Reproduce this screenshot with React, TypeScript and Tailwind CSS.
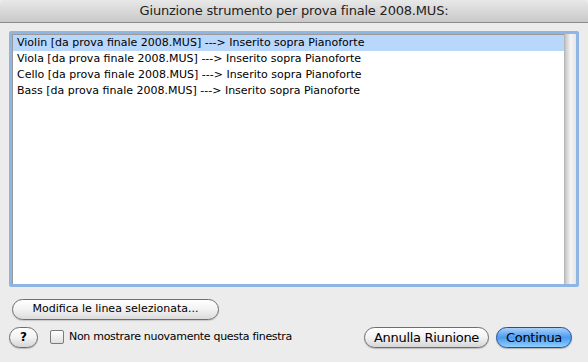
import React, { useState } from "react";

const rows = [
  "Violin [da prova finale 2008.MUS] ---> Inserito sopra Pianoforte",
  "Viola [da prova finale 2008.MUS] ---> Inserito sopra Pianoforte",
  "Cello [da prova finale 2008.MUS] ---> Inserito sopra Pianoforte",
  "Bass [da prova finale 2008.MUS] ---> Inserito sopra Pianoforte",
];

const font = "font-['Lucida_Grande','DejaVu_Sans',sans-serif]";

export default function App() {
  const [selected, setSelected] = useState(0);
  const [hide, setHide] = useState(false);

  return (
    <div className={`w-[588px] h-[362px] bg-[#ececec] ${font} text-black overflow-hidden flex flex-col`}>
      {/* Title bar */}
      <div className="h-[23px] shrink-0 bg-gradient-to-b from-[#e8e8e8] to-[#c9c9c9] border-b border-[#8a8a8a] rounded-t-[5px] flex items-center justify-center">
        <span className="text-[13px] tracking-[-0.2px] text-[#222]">Giunzione strumento per prova finale 2008.MUS:</span>
      </div>

      <div className="flex-1 flex flex-col px-[9px] pt-[8px]">
        {/* List */}
        <div className="h-[256px] border-[3px] border-[#8fb6e3] rounded-[2px] bg-white flex">
          <div className="flex-1 border-l border-t border-[#9a9a9a]">
            {rows.map((r, i) => (
              <div
                key={r}
                onClick={() => setSelected(i)}
                className={`h-[16px] pl-[4px] text-[11px] leading-[16px] whitespace-nowrap ${
                  selected === i ? "bg-[#b9d6fb]" : ""
                }`}
              >
                {r}
              </div>
            ))}
          </div>
          <div className="w-[12px] bg-gradient-to-r from-[#c4c4c4] via-[#f4f4f4] to-[#e6e6e6] border-l border-[#b5b5b5]" />
        </div>

        {/* Modifica */}
        <div className="mt-[8px] pl-[3px]">
          <button className="w-[207px] h-[21px] rounded-full border border-[#6e6e6e] bg-gradient-to-b from-white via-[#f2f2f2] to-[#dcdcdc] text-[11px] shadow-[0_1px_1px_rgba(0,0,0,0.15)]">
            Modifica le linea selezionata...
          </button>
        </div>

        {/* Bottom row */}
        <div className="mt-[7px] flex items-center">
          <button className="w-[29px] h-[21px] rounded-full border border-[#6e6e6e] bg-gradient-to-b from-white via-[#f2f2f2] to-[#d6d6d6] text-[12px] font-bold shadow-[0_1px_1px_rgba(0,0,0,0.2)]">
            ?
          </button>
          <label className="ml-[12px] flex items-center gap-[5px] text-[11px] tracking-[-0.3px] cursor-pointer">
            <span
              onClick={() => setHide(!hide)}
              className="w-[14px] h-[14px] rounded-[2px] border border-[#7a7a7a] bg-gradient-to-b from-white to-[#e0e0e0] flex items-center justify-center text-[10px] leading-none"
            >
              {hide ? "✓" : ""}
            </span>
            Non mostrare nuovamente questa finestra
          </label>
          <div className="ml-auto flex gap-[7px] pr-[7px]">
            <button className="w-[125px] h-[21px] rounded-full border border-[#6e6e6e] bg-gradient-to-b from-white via-[#f2f2f2] to-[#d6d6d6] text-[13px] tracking-[-0.3px] shadow-[0_1px_1px_rgba(0,0,0,0.2)]">
              Annulla Riunione
            </button>
            <button className="w-[76px] h-[21px] rounded-full border border-[#1f4fa0] bg-gradient-to-b from-[#a9d0f8] via-[#4a9af0] to-[#8fd0ff] text-[13px] tracking-[-0.3px] shadow-[0_1px_1px_rgba(0,0,0,0.25)]">
              Continua
            </button>
          </div>
        </div>
      </div>
    </div>
  );
}
